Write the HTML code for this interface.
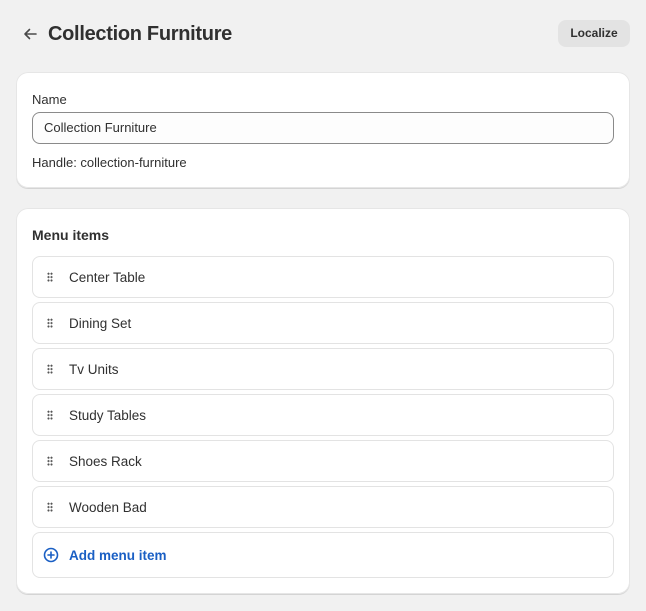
<!DOCTYPE html>
<html><head><style>
*{box-sizing:border-box;margin:0;padding:0}
body{width:646px;height:611px;background:#f1f1f1;font-family:"Liberation Sans",sans-serif;color:#303030;position:relative;overflow:hidden}
.abs{position:absolute}
.card{position:absolute;left:16px;width:614px;background:#fff;border-radius:12px;box-shadow:0 1px 0 #d4d4d4,0 0 0 1px #e6e6e6 inset}
.item{position:absolute;left:16px;width:582px;height:42px;border:1px solid #e3e3e3;border-radius:8px;background:#fff}
.item span{position:absolute;left:36px;top:13px;font-size:13.5px;color:#303030}
.grip{position:absolute;left:14px;top:15px;width:6px;height:10px;background-image:radial-gradient(circle,#555 0.9px,transparent 1.2px);background-size:3px 3.4px}
</style></head><body>
<svg class="abs" style="left:22px;top:26px" width="16" height="16" viewBox="0 0 16 16"><path d="M14 8H3M7.5 3.5L3 8l4.5 4.5" fill="none" stroke="#4a4a4a" stroke-width="1.6" stroke-linecap="round" stroke-linejoin="round"/></svg>
<div class="abs" style="left:48px;top:23px;font-size:20px;font-weight:bold;color:#303030;letter-spacing:-0.3px">Collection Furniture</div>
<div class="abs" style="left:558px;top:20px;width:72px;height:27px;background:#e3e3e3;border-radius:8px;font-size:12px;font-weight:bold;color:#303030;text-align:center;line-height:27px">Localize</div>

<div class="card" style="top:72px;height:116px">
<div class="abs" style="left:16px;top:20px;font-size:13px">Name</div>
<div class="abs" style="left:16px;top:40px;width:582px;height:32px;border:1px solid #8a8a8a;border-radius:8px;background:#fdfdfd;font-size:13px;padding-left:11px;line-height:30px">Collection Furniture</div>
<div class="abs" style="left:16px;top:83px;font-size:13px">Handle: collection-furniture</div>
</div>

<div class="card" style="top:208px;height:386px">
<div class="abs" style="left:16px;top:19px;font-size:14px;font-weight:bold">Menu items</div>
<div class="item" style="top:48px"><i class="grip"></i><span>Center Table</span></div>
<div class="item" style="top:94px"><i class="grip"></i><span>Dining Set</span></div>
<div class="item" style="top:140px"><i class="grip"></i><span>Tv Units</span></div>
<div class="item" style="top:186px"><i class="grip"></i><span>Study Tables</span></div>
<div class="item" style="top:232px"><i class="grip"></i><span>Shoes Rack</span></div>
<div class="item" style="top:278px"><i class="grip"></i><span>Wooden Bad</span></div>
<div class="item" style="top:324px;height:46px">
<svg class="abs" style="left:10px;top:14px" width="16" height="16" viewBox="0 0 16 16"><circle cx="8" cy="8" r="6.5" fill="none" stroke="#1a5fc4" stroke-width="1.6"/><path d="M8 5v6M5 8h6" stroke="#1a5fc4" stroke-width="1.6" stroke-linecap="round"/></svg>
<span style="top:15px;color:#1a5fc4;font-weight:bold">Add menu item</span></div>
</div>
</body></html>
